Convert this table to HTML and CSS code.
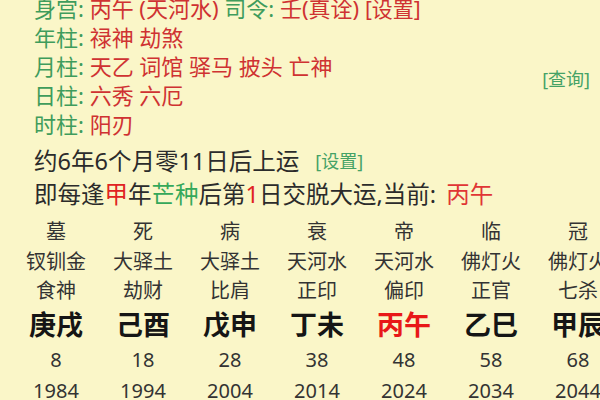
FILE: index.html
```html
<!DOCTYPE html>
<html lang="zh-CN">
<head>
<meta charset="utf-8">
<link rel="stylesheet" href="styles.css">
</head>
<body>
<div class="page">
  <div class="top">
    <div class="shensha">
      <div class="line"><span class="g">身宫:</span> <span class="r">丙午 (天河水)</span> <span class="g">司令:</span> <span class="r">壬(真诠)</span> <span class="r set">[设置]</span></div>
      <div class="line"><span class="g">年柱:</span> <span class="r">禄神 劫煞</span></div>
      <div class="line"><span class="g">月柱:</span> <span class="r">天乙 词馆 驿马 披头 亡神</span></div>
      <div class="line"><span class="g">日柱:</span> <span class="r">六秀 六厄</span></div>
      <div class="line"><span class="g">时柱:</span> <span class="r">阳刃</span></div>
    </div>
    <div class="query">[查询]</div>
  </div>
  <div class="yun">
    <div class="yline">约6年6个月零11日后上运<span class="link">[设置]</span></div>
    <div class="yline">即每逢<span class="hr">甲</span>年<span class="hg">芒种</span>后第<span class="hr">1</span>日交脱大运,当前: <span class="cur">丙午</span></div>
  </div>
  <div class="grid">
    <div class="col"><div class="c1">墓</div><div class="c2">钗钏金</div><div class="c3">食神</div><div class="c4">庚戌</div><div class="c5">8</div><div class="c6">1984</div></div>
    <div class="col"><div class="c1">死</div><div class="c2">大驿土</div><div class="c3">劫财</div><div class="c4">己酉</div><div class="c5">18</div><div class="c6">1994</div></div>
    <div class="col"><div class="c1">病</div><div class="c2">大驿土</div><div class="c3">比肩</div><div class="c4">戊申</div><div class="c5">28</div><div class="c6">2004</div></div>
    <div class="col"><div class="c1">衰</div><div class="c2">天河水</div><div class="c3">正印</div><div class="c4">丁未</div><div class="c5">38</div><div class="c6">2014</div></div>
    <div class="col"><div class="c1">帝</div><div class="c2">天河水</div><div class="c3">偏印</div><div class="c4 now">丙午</div><div class="c5">48</div><div class="c6">2024</div></div>
    <div class="col"><div class="c1">临</div><div class="c2">佛灯火</div><div class="c3">正官</div><div class="c4">乙巳</div><div class="c5">58</div><div class="c6">2034</div></div>
    <div class="col"><div class="c1">冠</div><div class="c2">佛灯火</div><div class="c3">七杀</div><div class="c4">甲辰</div><div class="c5">68</div><div class="c6">2044</div></div>
  </div>
</div>
</body>
</html>
```
FILE: styles.css
```css
html, body {
  margin: 0;
  padding: 0;
  background: #faf6c8;
}
body {
  width: 600px;
  height: 400px;
  overflow: hidden;
  font-family: "Noto Sans", "Noto Sans CJK SC", sans-serif;
  color: #2a2a2a;
}
.page {
  margin-top: -6.5px;
}
.top {
  display: flex;
  justify-content: space-between;
  padding-left: 34px;
  padding-right: 10px;
}
.line {
  font-size: 22px;
  line-height: 29px;
  height: 29px;
  white-space: nowrap;
}
.g { color: #3f9c5c; }
.r { color: #cf3232; }
.set { font-size: 21px; }
.query {
  color: #45a266;
  font-size: 18px;
  line-height: 20px;
  padding-top: 75px;
}
.yun {
  padding-left: 34px;
  margin-top: 6px;
}
.yline {
  font-size: 23.5px;
  line-height: 33px;
  height: 33px;
  white-space: nowrap;
  color: #2b2b2b;
}
.link {
  color: #45a266;
  font-size: 18px;
  margin-left: 16px;
  vertical-align: 2px;
}
.hr { color: #e02222; }
.hg { color: #35a85a; }
.cur { color: #e03535; margin-left: 4px; }
.grid {
  display: grid;
  grid-template-columns: repeat(7, 87px);
  padding-left: 12.5px;
  margin-top: 6.5px;
}
.col {
  text-align: center;
  white-space: nowrap;
  color: #333;
  font-size: 20px;
}
.c1 { line-height: 30px; height: 30px; }
.c2 { line-height: 30px; height: 30px; }
.c3 { line-height: 28px; height: 28px; }
.c4 {
  line-height: 40px;
  height: 40px;
  font-size: 27px;
  font-weight: 700;
  color: #151515;
}
.c4.now { color: #e81818; }
.c5 { line-height: 30px; height: 30px; }
.c6 { line-height: 32px; height: 32px; }
```
